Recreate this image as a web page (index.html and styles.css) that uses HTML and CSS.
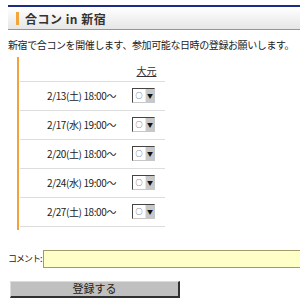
FILE: index.html
```html
<!DOCTYPE html>
<html lang="ja">
<head>
  <meta charset="UTF-8">
  <title>合コン in 新宿</title>
  <link rel="stylesheet" href="styles.css">
</head>
<body>
  <div class="page">
    <div class="title-bar">
      <h1>合コン in 新宿</h1>
    </div>

    <p class="lead">新宿で合コンを開催します、参加可能な日時の登録お願いします。</p>

    <div class="schedule">
      <table>
        <tr class="head">
          <th></th>
          <th><span class="name">大元</span></th>
        </tr>
        <tr>
          <td class="date">2/13(土) 18:00～</td>
          <td class="pick"><span class="sel"><span class="val">○</span><span class="arrow">▼</span></span></td>
        </tr>
        <tr>
          <td class="date">2/17(水) 19:00～</td>
          <td class="pick"><span class="sel"><span class="val">○</span><span class="arrow">▼</span></span></td>
        </tr>
        <tr>
          <td class="date">2/20(土) 18:00～</td>
          <td class="pick"><span class="sel"><span class="val">○</span><span class="arrow">▼</span></span></td>
        </tr>
        <tr>
          <td class="date">2/24(水) 19:00～</td>
          <td class="pick"><span class="sel"><span class="val">○</span><span class="arrow">▼</span></span></td>
        </tr>
        <tr>
          <td class="date">2/27(土) 18:00～</td>
          <td class="pick"><span class="sel"><span class="val">○</span><span class="arrow">▼</span></span></td>
        </tr>
      </table>
    </div>

    <div class="comment">
      <label for="comment">コメント:</label>
      <input type="text" id="comment">
    </div>

    <button class="submit">登録する</button>
  </div>
</body>
</html>
```

FILE: styles.css
```css
* {
  margin: 0;
  padding: 0;
  box-sizing: border-box;
}

body {
  font-family: "Noto Sans CJK JP", "DejaVu Sans", sans-serif;
  background: #ffffff;
  color: #222222;
  overflow: hidden;
}

.page {
  padding: 5px 0 0 8px;
  width: 300px;
}

.title-bar {
  border-top: 2px solid #1c2b86;
  border-bottom: 1px solid #8c96aa;
  background: linear-gradient(#ffffff, #e6e6e6);
  height: 25px;
  padding: 5px 0 0 8px;
}

.title-bar h1 {
  font-size: 12px;
  line-height: 13px;
  font-weight: bold;
  color: #333333;
  border-left: 3px solid #f0a43a;
  padding-left: 6px;
  letter-spacing: 0.5px;
}

.lead {
  font-size: 10px;
  line-height: 12px;
  letter-spacing: -0.4px;
  margin-top: 9px;
  color: #222222;
  white-space: nowrap;
}

.schedule {
  margin: 6px 0 0 9px;
  width: 148px;
  border-left: 2px solid #f2a23a;
  padding: 0 0 3px 1px;
}

.schedule table {
  width: 100%;
  border-collapse: collapse;
}

.schedule td,
.schedule th {
  border-bottom: 1px solid #dddddd;
  font-size: 10px;
  font-weight: normal;
}

.head th {
  height: 24px;
  padding-top: 4px;
}

.name {
  text-decoration: underline;
  color: #333333;
  font-size: 10px;
}

.schedule td {
  height: 29px;
}

.date {
  text-align: right;
  padding-right: 12px;
  letter-spacing: -0.4px;
}

.pick {
  width: 37px;
  padding-left: 4px;
}

.sel {
  display: flex;
  width: 23px;
  height: 15px;
  border: 1px solid #444444;
  border-right-color: #c8c8c8;
  border-bottom-color: #c8c8c8;
  background: #ffffff;
}

.val {
  flex: 1;
  font-size: 7px;
  line-height: 13px;
  text-align: center;
}

.arrow {
  width: 9px;
  background: #c8c8c8;
  border-left: 1px solid #e8e8e8;
  font-size: 6px;
  line-height: 13px;
  text-align: center;
  color: #111111;
}

.comment {
  display: flex;
  align-items: center;
  margin-top: 20px;
}

.comment label {
  flex-shrink: 0;
  white-space: nowrap;
  font-size: 9px;
  letter-spacing: -1px;
  margin-right: 1px;
}

.comment input {
  flex: 1;
  min-width: 0;
  height: 18px;
  margin-right: -4px;
  border: 1px solid #a39a68;
  border-right: none;
  background: #ffffc8;
}

.submit {
  display: block;
  margin: 13px 0 0 2px;
  width: 170px;
  height: 17px;
  background: #c0c0c0;
  border: none;
  border-top: 1px solid #dcdcdc;
  border-left: 1px solid #dcdcdc;
  border-right: 2px solid #303030;
  border-bottom: 2px solid #303030;
  font-family: "Noto Sans CJK JP", sans-serif;
  font-size: 11px;
  line-height: 13px;
  color: #222222;
}
```
